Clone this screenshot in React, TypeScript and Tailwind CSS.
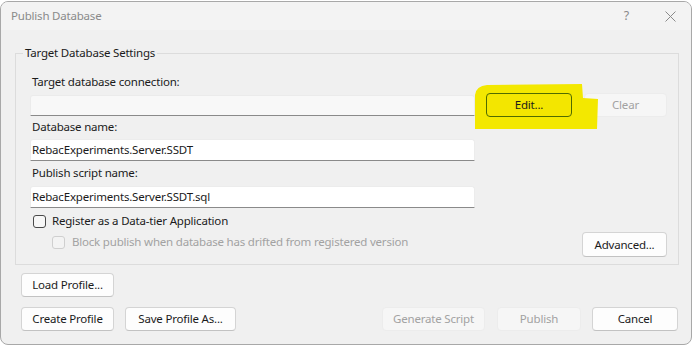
import { useState } from "react";

// Small reusable pieces for the Win11-style dialog
function DlgButton({
  label,
  disabled,
  className = "",
}: {
  label: string;
  disabled?: boolean;
  className?: string;
}) {
  return (
    <button
      disabled={disabled}
      className={`flex h-[24px] items-center justify-center rounded-[4px] border text-[11.5px] leading-none ${
        disabled
          ? "border-[#ececec] bg-[#f6f6f6] text-[#a2a2a2]"
          : "border-[#d4d4d4] border-b-[#c2c2c2] bg-[#fdfdfd] text-[#1b1b1b]"
      } ${className}`}
    >
      {label}
    </button>
  );
}

function TextField({ value }: { value: string }) {
  return (
    <div className="flex h-[22px] w-[445px] items-center rounded-t-[3px] border border-[#ececec] border-b-[#8a8a8a] bg-white pl-[1px] text-[#1b1b1b]">
      {value}
    </div>
  );
}

function Checkbox({ checked, disabled }: { checked: boolean; disabled?: boolean }) {
  return (
    <span
      className={`inline-block h-[13px] w-[13px] shrink-0 rounded-[3px] border ${
        disabled ? "border-[#cfcfcf] bg-[#f3f3f3]" : "border-[#4a4a4a] bg-[#f7f7f7]"
      }`}
    >
      {checked && <span className="block h-full w-full bg-[#005fb8]" />}
    </span>
  );
}

export default function App() {
  const [registerDac] = useState(false);

  return (
    <div className="h-[350px] w-[694px] overflow-hidden bg-white font-['Noto_Sans',sans-serif] text-[11.5px] tracking-[-0.2px]">
      <div className="relative mt-[1px] flex h-[344px] w-[692px] flex-col overflow-hidden rounded-[8px] border border-[#a8a8a8] bg-[#f0f0f0]">
        {/* ── Title bar ─────────────────────────── */}
        <div className="flex h-[28px] items-center bg-[#f3f3f3] pl-[10px] text-[#8a8a8a]">
          <span>Publish Database</span>
          <span className="ml-auto mr-[36px] text-[12.5px] text-[#8a8a8a]">?</span>
          <svg className="mr-[15px] h-[11px] w-[11px]" viewBox="0 0 11 11" fill="none" stroke="#8a8a8a" strokeWidth={1}>
            <path d="M0.5 0.5l10 10M10.5 0.5l-10 10" />
          </svg>
        </div>

        {/* ── Target Database Settings ───────────── */}
        <fieldset className="ml-[14px] mt-[15px] w-[664px] border border-[#dcdcdc]">
          <legend className="ml-[7px] px-[2px] leading-[16px] text-[#1b1b1b]">
            Target Database Settings
          </legend>
          <div className="pb-[7px] pl-[14px] pr-[11px] text-[#1b1b1b]">
            <div className="mt-[13px] h-[16px] pl-[2px] leading-[16px]">Target database connection:</div>

            <div className="mt-[3px] flex h-[24px] items-center">
              <div className="h-[21px] w-[445px] rounded-t-[3px] border border-[#ebebeb] border-b-[#8a8a8a] bg-[#f8f8f8]" />
              <DlgButton label="Edit..." className="z-10 ml-[11px] w-[86px] !border-[#4f6b00] !bg-[#f3e600]" />
              <DlgButton label="Clear" disabled className="ml-[12px] w-[83px]" />
            </div>

            <div className="mt-[2px] h-[16px] pl-[2px] leading-[16px]">Database name:</div>
            <div className="mt-[4px]">
              <TextField value="RebacExperiments.Server.SSDT" />
            </div>

            <div className="mt-[4px] h-[16px] pl-[2px] leading-[16px]">Publish script name:</div>
            <div className="mt-[5px]">
              <TextField value="RebacExperiments.Server.SSDT.sql" />
            </div>

            <div className="mt-[5px] flex h-[16px] items-center gap-[6px] pl-[3px]">
              <Checkbox checked={registerDac} />
              <span>Register as a Data-tier Application</span>
            </div>

            <div className="mt-[3px] flex items-start justify-between">
              <div className="mt-[2px] flex h-[16px] items-center gap-[7px] pl-[22px] text-[#a2a2a2]">
                <Checkbox checked={false} disabled />
                <span>Block publish when database has drifted from registered version</span>
              </div>
              <DlgButton label="Advanced..." className="h-[25px] w-[85px]" />
            </div>
          </div>
        </fieldset>

        {/* ── Profile / action buttons ───────────── */}
        <div className="ml-[20px] mt-[8px]">
          <DlgButton label="Load Profile..." className="w-[93px]" />
        </div>
        <div className="mt-[10px] flex pl-[20px] pr-[13px]">
          <DlgButton label="Create Profile" className="w-[93px]" />
          <DlgButton label="Save Profile As..." className="ml-[11px] w-[111px]" />
          <DlgButton label="Generate Script" disabled className="ml-auto w-[103px]" />
          <DlgButton label="Publish" disabled className="ml-[12px] w-[84px]" />
          <DlgButton label="Cancel" className="ml-[11px] w-[86px]" />
        </div>

        {/* highlighter mark over the Edit button */}
        <svg className="absolute left-[472px] top-[81px] h-[48px] w-[128px]" viewBox="0 0 128 48">
          <path
            d="M2 12 Q3 3 14 2 L109 1 L110 15 L125 16 L124 46 L2 46 Z"
            fill="#f3e800"
          />
        </svg>
      </div>
    </div>
  );
}
